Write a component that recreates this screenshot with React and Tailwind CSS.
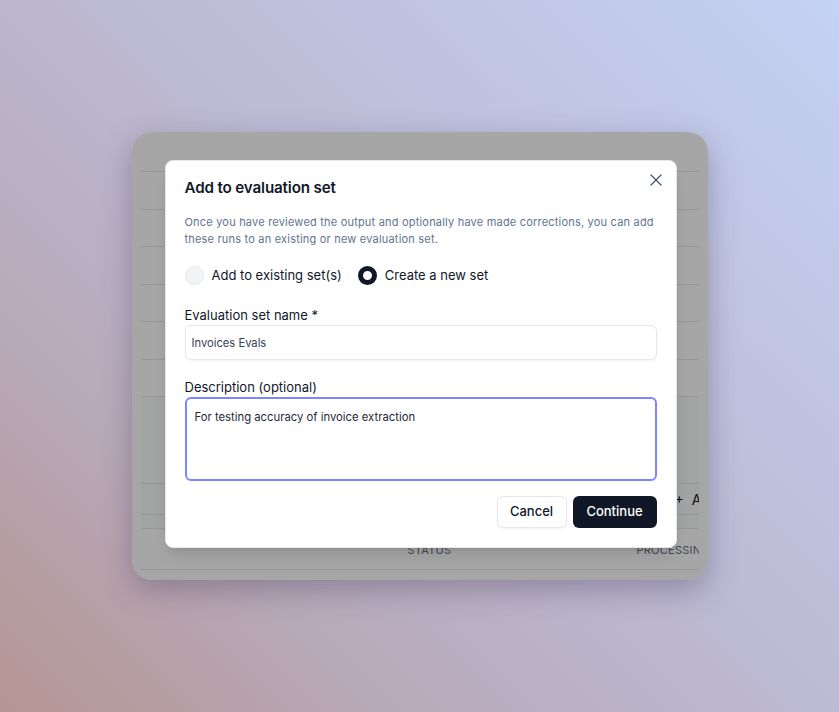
import React from "react";
import { X } from "lucide-react";

function Row({ h }) {
  return <div className={`${h} border-b border-gray-200`} />;
}

export default function App() {
  return (
    <div
      className="w-[839px] h-[712px] flex items-center justify-center bg-[linear-gradient(225deg,#c4d2f4_0%,#bdbbd5_45%,#b8a9b9_75%,#b59592_100%)]"
      style={{ fontFamily: "Inter, 'Noto Sans', sans-serif" }}
    >
      <div className="relative w-[576px] h-[448px] rounded-[20px] bg-white overflow-hidden shadow-[0_10px_30px_rgba(60,50,80,0.35)]">
        {/* background page content */}
        <div className="flex flex-col px-[9px]">
          <Row h="h-[40px]" />
          <Row h="h-[38px]" />
          <Row h="h-[37px]" />
          <Row h="h-[38px]" />
          <Row h="h-[37px]" />
          <Row h="h-[38px]" />
          <Row h="h-[37px]" />
          <div className="h-[132px] bg-gray-50 flex flex-col border-b border-gray-200">
            <div className="h-[87px] border-b border-gray-200" />
            <div className="h-[31px] border-b border-gray-200 flex items-center pl-[534px] text-[14px] text-gray-900 overflow-hidden">
              <span className="whitespace-nowrap">+&nbsp;&nbsp;Add run</span>
            </div>
          </div>
          <div className="h-[41px] border-b border-gray-200 flex items-center pt-[2px] text-[11px] tracking-wide text-gray-500 uppercase overflow-hidden whitespace-nowrap">
            <span className="ml-[267px]">Status</span>
            <span className="ml-[185px]">Processing</span>
          </div>
        </div>

        {/* overlay */}
        <div className="absolute inset-0 bg-black/35" />

        {/* modal */}
        <div className="absolute left-[33px] top-[28px] w-[512px] bg-white rounded-lg border border-gray-200 shadow-lg pt-[15px] px-[19px] pb-[19px]">
          <button className="absolute top-[9px] right-[10px] text-gray-600">
            <X size={20} strokeWidth={1.5} />
          </button>
          <h2 className="text-[15.2px] leading-6 font-semibold text-gray-900 tracking-[-0.01em]">
            Add to evaluation set
          </h2>
          <p className="mt-[14px] text-[11px] leading-[17px] tracking-[0.2px] text-slate-500">
            Once you have reviewed the output and optionally have made corrections, you can add these runs to an existing or new evaluation set.
          </p>
          <div className="mt-[18px] flex items-center gap-4 text-[13px] text-gray-900">
            <label className="flex items-center gap-2">
              <span className="w-[19px] h-[19px] rounded-full bg-gray-100 border border-gray-200" />
              <span>Add to existing set(s)</span>
            </label>
            <label className="flex items-center gap-2">
              <span className="w-[19px] h-[19px] rounded-full bg-white border-[5px] border-gray-900" />
              <span>Create a new set</span>
            </label>
          </div>
          <div className="mt-[19px] text-[13px] leading-5 text-gray-900">Evaluation set name *</div>
          <div className="mt-0 h-[35px] rounded-md border border-gray-200 shadow-xs flex items-center pt-[2px] px-1.5 text-[11.2px] text-gray-700">
            Invoices Evals
          </div>
          <div className="mt-[17px] text-[13px] leading-5 text-gray-900">Description (optional)</div>
          <div className="h-[84px] rounded-md border-2 border-indigo-400 pt-[10px] px-2 text-[11.3px] leading-4 text-gray-800">
            For testing accuracy of invoice extraction
          </div>
          <div className="mt-[15px] flex justify-end gap-1.5">
            <button className="h-8 w-[70px] rounded-md border border-gray-200 bg-white shadow-xs text-[13px] font-medium text-gray-900">
              Cancel
            </button>
            <button className="h-8 w-[84px] rounded-md bg-gray-900 text-[13px] font-medium text-white">
              Continue
            </button>
          </div>
        </div>
      </div>
    </div>
  );
}
